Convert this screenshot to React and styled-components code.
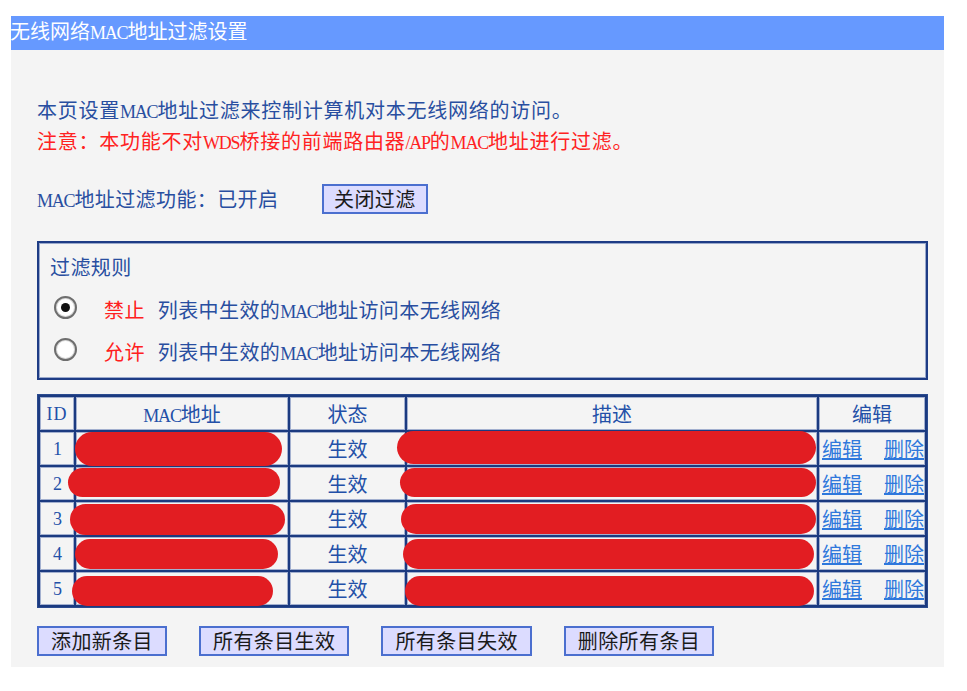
import React from 'react';
import styled, { createGlobalStyle } from 'styled-components';

const GlobalStyle = createGlobalStyle`
  body {
    margin: 0;
    background: #ffffff;
    font-family: "Noto Sans CJK SC", "Liberation Serif", sans-serif;
  }
`;

// SimSun-like narrow serif Latin runs inside the CJK text
const Lat = styled.span`
  font-family: "Liberation Serif", serif;
  font-size: 18px;
  line-height: 1;
  letter-spacing: ${p => (p.wide ? '1px' : '-1.2px')};
`;

const Panel = styled.div`
  margin: 16px 0 0 11px;
  width: 933px;
  background: #f4f4f4;
  padding-bottom: 11px;
  overflow: hidden;
`;

const TitleBar = styled.div`
  height: 34px;
  background: #6699ff;
  color: #ffffff;
  font-size: 20px;
  line-height: 30px;
  margin-left: -1px;
  white-space: nowrap;
`;

const Body = styled.div`
  padding: 44px 16px 0 26px;
  letter-spacing: 0.4px;
`;

const Line = styled.div`
  font-size: 20px;
  line-height: 31px;
  letter-spacing: 0.75px;
  color: ${p => (p.warn ? '#ff2222' : '#284ea0')};
  white-space: nowrap;
`;

const StatusRow = styled.div`
  display: flex;
  align-items: center;
  margin-top: 28px;
  height: 30px;
`;

const StatusLabel = styled.span`
  width: 285px;
  font-size: 20px;
  line-height: 30px;
  color: #284ea0;
  white-space: nowrap;
`;

const Button = styled.button`
  height: 30px;
  padding: 0 ${p => p.pad || 12}px;
  background: #dcdcff;
  border: 2px solid #4b6fcf;
  font-family: inherit;
  font-size: 20px;
  letter-spacing: 0.4px;
  line-height: 26px;
  color: #1a1a1a;
  cursor: pointer;
`;

const RuleBox = styled.div`
  margin-top: 27px;
  height: 139px;
  box-sizing: border-box;
  border: 2px solid #1e3c85;
  box-shadow: inset 0 0 0 1px #9aa9cc;
  padding: 11px 0 0 11px;
`;

const RuleTitle = styled.div`
  font-size: 20px;
  line-height: 26px;
  color: #284ea0;
`;

const RuleList = styled.div`
  margin-top: 9px;
`;

const RuleRow = styled.label`
  display: flex;
  align-items: center;
  height: 42px;
  font-size: 20px;
  line-height: 26px;
`;

const Radio = styled.span`
  width: 19px;
  height: 19px;
  margin: 0 27px 5px 4px;
  border-radius: 50%;
  border: 2px solid #6e6e6e;
  background: #ffffff;
  box-shadow: inset 0 0 0 1px #d6d6d6;
  display: flex;
  align-items: center;
  justify-content: center;
  &::after {
    content: '';
    width: 9px;
    height: 9px;
    border-radius: 50%;
    background: ${p => (p.checked ? '#111111' : 'transparent')};
  }
`;

const RuleName = styled.span`
  color: #ff2020;
  margin-right: 13px;
`;

const RuleText = styled.span`
  color: #284ea0;
`;

const Grid = styled.div`
  margin-top: 14px;
  display: grid;
  grid-template-columns: 34px 212px 115px 410px 1fr;
  grid-auto-rows: 33px;
  gap: 2px;
  padding: 2px;
  background: #1b3a80;
  border: 1px solid #2a4a8e;
  letter-spacing: 0;
`;

const Cell = styled.div`
  position: relative;
  background: #f4f4f4;
  border: 1px solid #a3b0cf;
  display: flex;
  align-items: center;
  justify-content: ${p => p.justify || 'center'};
  padding: ${p => p.pad || '0'};
  font-size: 20px;
  line-height: 26px;
  color: #2350a8;
  white-space: nowrap;
`;

const Redact = styled.span`
  position: absolute;
  background: #e21d22;
  border-radius: 17px;
  left: ${p => p.l}px;
  right: ${p => p.r}px;
  top: ${p => p.t}px;
  bottom: ${p => p.b}px;
`;

const ActionLink = styled.a`
  color: #2f78dc;
  text-decoration: underline;
  cursor: pointer;
`;

const ButtonBar = styled.div`
  display: flex;
  gap: 32px;
  margin-top: 18px;
`;

const rows = [
  { id: 1, mac: [-2, 5, -1, -2], desc: [-11, 0, -2, 0] },
  { id: 2, mac: [-9, 7, 0, 2], desc: [-8, 0, 0, 2] },
  { id: 3, mac: [-7, 2, 1, -1], desc: [-7, 0, 1, 0] },
  { id: 4, mac: [-2, 9, 1, 0], desc: [-5, 2, 1, 0] },
  { id: 5, mac: [-5, 14, 3, -2], desc: [-3, 2, 3, -2] },
];

const headers = [
  <Lat key="id" wide>ID</Lat>,
  <span key="mac"><Lat>MAC</Lat>地址</span>,
  '状态',
  '描述',
  '编辑',
];

export default function App() {
  return (
    <>
      <GlobalStyle />
      <Panel>
        <TitleBar>无线网络<Lat>MAC</Lat>地址过滤设置</TitleBar>
        <Body>
          <Line>本页设置<Lat>MAC</Lat>地址过滤来控制计算机对本无线网络的访问。</Line>
          <Line warn>
            注意：本功能不对<Lat>WDS</Lat>桥接的前端路由器<Lat>/AP</Lat>的<Lat>MAC</Lat>地址进行过滤。
          </Line>

          <StatusRow>
            <StatusLabel><Lat>MAC</Lat>地址过滤功能：已开启</StatusLabel>
            <Button pad={10}>关闭过滤</Button>
          </StatusRow>

          <RuleBox>
            <RuleTitle>过滤规则</RuleTitle>
            <RuleList>
              <RuleRow>
                <Radio checked />
                <RuleName>禁止</RuleName>
                <RuleText>列表中生效的<Lat>MAC</Lat>地址访问本无线网络</RuleText>
              </RuleRow>
              <RuleRow>
                <Radio />
                <RuleName>允许</RuleName>
                <RuleText>列表中生效的<Lat>MAC</Lat>地址访问本无线网络</RuleText>
              </RuleRow>
            </RuleList>
          </RuleBox>

          <Grid>
            {headers.map((h, i) => (
              <Cell key={i}>{h}</Cell>
            ))}
            {rows.map(r => (
              <React.Fragment key={r.id}>
                <Cell><Lat>{r.id}</Lat></Cell>
                <Cell>
                  <Redact l={r.mac[0]} r={r.mac[1]} t={r.mac[2]} b={r.mac[3]} />
                </Cell>
                <Cell>生效</Cell>
                <Cell>
                  <Redact l={r.desc[0]} r={r.desc[1]} t={r.desc[2]} b={r.desc[3]} />
                </Cell>
                <Cell justify="space-between" pad="0 0 0 2px">
                  <ActionLink>编辑</ActionLink>
                  <ActionLink>删除</ActionLink>
                </Cell>
              </React.Fragment>
            ))}
          </Grid>

          <ButtonBar>
            <Button>添加新条目</Button>
            <Button>所有条目生效</Button>
            <Button>所有条目失效</Button>
            <Button>删除所有条目</Button>
          </ButtonBar>
        </Body>
      </Panel>
    </>
  );
}
